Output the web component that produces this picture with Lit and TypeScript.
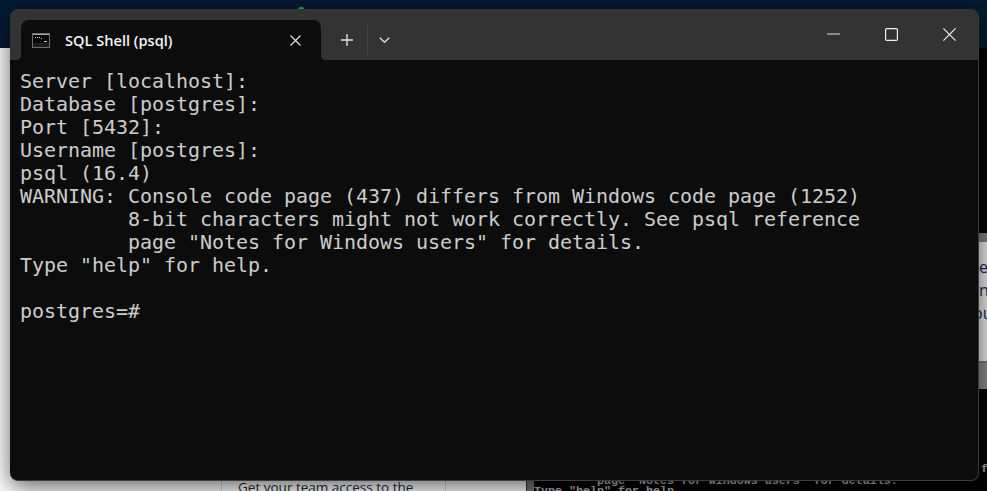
import { LitElement, html, css } from "lit";
import { customElement } from "lit/decorators.js";

const OUTPUT = `Server [localhost]:
Database [postgres]:
Port [5432]:
Username [postgres]:
psql (16.4)
WARNING: Console code page (437) differs from Windows code page (1252)
         8-bit characters might not work correctly. See psql reference
         page "Notes for Windows users" for details.
Type "help" for help.

postgres=#`;

@customElement("app-root")
export class AppRoot extends LitElement {
  static styles = css`
    :host {
      display: block;
      width: 987px;
      height: 491px;
      position: relative;
      overflow: hidden;
      background: #000;
      font-family: "Open Sans", sans-serif;
    }
    .navy {
      position: absolute;
      left: 0;
      top: 0;
      right: 0;
      height: 48px;
      background: #041b33;
    }
    .blob {
      position: absolute;
      left: 298px;
      top: 7px;
      width: 7px;
      height: 4px;
      border-radius: 3px 4px 0 0;
      background: #14b866;
    }
    .page {
      position: absolute;
      left: 0;
      top: 48px;
      width: 527px;
      height: 443px;
      background: #fff;
    }
    .rule {
      position: absolute;
      top: 0;
      bottom: 0;
      width: 1px;
      background: #d8d8d8;
    }
    .rule.a {
      left: 221px;
    }
    .rule.b {
      left: 445px;
    }
    .promo {
      position: absolute;
      left: 238px;
      top: 431px;
      font: 13.5px/16px "Open Sans", sans-serif;
      color: #1c2b3a;
      white-space: nowrap;
    }
    .back-term {
      position: absolute;
      left: 526px;
      top: 470px;
      right: 0;
      bottom: 0;
      display: flex;
      background: #000;
      border-left: 1px solid #333;
    }
    .back-scroll {
      width: 7px;
      background: #777;
    }
    .back-term pre {
      margin: 0;
      font: 11.67px/10px "Liberation Mono", monospace;
      font-weight: 700;
      color: #b8b8b8;
      padding-top: 6px;
    }
    .dialog {
      position: absolute;
      left: 978px;
      top: 233px;
      right: 0;
      height: 156px;
      display: flex;
      flex-direction: column;
      background: #e6e6e6;
      color: #0b2a55;
      font: 16px/23px "Open Sans", sans-serif;
      overflow: hidden;
    }
    .dialog .bar {
      height: 9px;
      background: #808080;
      flex: none;
    }
    .dialog .body {
      flex: 1;
      padding: 14px 0 0 1px;
      white-space: nowrap;
    }
    .dialog .body .shifted {
      margin-left: -6px;
    }
    .dialog .foot {
      height: 26px;
      flex: none;
      border-top: 2px solid #777;
      background: #8a8a8a;
    }
    .stray {
      position: absolute;
      left: 981px;
      top: 462px;
      font: 700 11.67px/14px "Liberation Mono", monospace;
      color: #a8a8a8;
    }
    .window {
      position: absolute;
      left: 10px;
      top: 9px;
      width: 969px;
      height: 472px;
      box-sizing: border-box;
      display: flex;
      flex-direction: column;
      background: #0c0c0c;
      border-radius: 8px;
      border: 1px solid #3c3c3c;
      border-top: 0;
      border-left: 0;
      overflow: hidden;
    }
    .shadow {
      position: absolute;
      left: 10px;
      top: 9px;
      width: 969px;
      height: 472px;
      border-radius: 8px;
      box-shadow: 0 6px 24px rgba(0, 0, 0, 0.62);
    }
    .titlebar {
      height: 51px;
      flex: none;
      display: flex;
      align-items: flex-end;
      background: #333;
      padding-left: 11px;
      color: #fff;
    }
    .tab {
      position: relative;
      width: 300px;
      height: 40px;
      box-sizing: border-box;
      display: flex;
      align-items: center;
      padding: 0 20px 0 11px;
      background: #0c0c0c;
      border-radius: 8px 8px 0 0;
    }
    .tab::before,
    .tab::after {
      content: "";
      position: absolute;
      bottom: 0;
      width: 4px;
      height: 4px;
    }
    .tab::before {
      left: -4px;
      background: radial-gradient(circle at 0 0, #333 3.5px, #0c0c0c 4px);
    }
    .tab::after {
      right: -4px;
      background: radial-gradient(circle at 100% 0, #333 3.5px, #0c0c0c 4px);
    }
    .tab .cmd {
      width: 18px;
      height: 15px;
      flex: none;
      margin-right: 15px;
    }
    .tab .label {
      flex: 1;
      font-size: 14.6px;
      font-weight: 600;
      color: #f4f4f4;
      white-space: nowrap;
    }
    .tab svg.x {
      width: 11px;
      height: 11px;
    }
    .tools {
      height: 40px;
      display: flex;
      align-items: center;
      padding-left: 20px;
    }
    .tools .plus {
      width: 12px;
      height: 12px;
    }
    .tools .sep {
      width: 1px;
      height: 30px;
      margin: 0 11px 0 14px;
      background: #444;
    }
    .tools .chev {
      width: 11px;
      height: 6px;
    }
    .caption {
      margin-left: auto;
      align-self: stretch;
      display: flex;
      align-items: flex-start;
      gap: 45px;
      padding: 19px 22px 0 0;
    }
    .caption svg {
      width: 13px;
      height: 13px;
      display: block;
    }
    pre.out {
      margin: 0;
      padding: 10px 0 0 10px;
      font: 20px/23px "DejaVu Sans Mono", monospace;
      letter-spacing: -0.04px;
      color: #ccc;
    }
  `;

  render() {
    return html`
      <div class="navy"></div>
      <div class="blob"></div>
      <div class="page">
        <div class="rule a"></div>
        <div class="rule b"></div>
        <div class="promo">Get your team access to the</div>
      </div>
      <div class="back-term">
        <div class="back-scroll"></div>
        <pre>         page "Notes for Windows users" for details.
Type "help" for help.</pre>
      </div>
      <div class="dialog">
        <div class="bar"></div>
        <div class="body">e<br />n<br /><span class="shifted">ou</span></div>
        <div class="foot"></div>
      </div>
      <div class="stray">f</div>
      <div class="shadow"></div>
      <div class="window">
        <div class="titlebar">
          <div class="tab">
            <svg class="cmd" viewBox="0 0 18 15">
              <rect x="0.5" y="0.5" width="17" height="14" fill="#050505" stroke="#6e6e6e" />
              <rect x="1" y="1" width="16" height="1" fill="#a8a8a8" />
              <path d="M3 4.5h1M5 4.5h1M7 4.5h1M9 5.5h1M12 8.5h3" stroke="#cfcfcf" stroke-width="1" fill="none" />
              <rect x="1" y="10" width="16" height="4" fill="#1c1c1c" />
            </svg>
            <span class="label">SQL Shell (psql)</span>
            <svg class="x" viewBox="0 0 11 11">
              <path d="M0.5 0.5L10.5 10.5M10.5 0.5L0.5 10.5" stroke="#e8e8e8" stroke-width="1.1" fill="none" />
            </svg>
          </div>
          <div class="tools">
            <svg class="plus" viewBox="0 0 12 12">
              <path d="M6 0V12M0 6H12" stroke="#e8e8e8" stroke-width="1.3" fill="none" />
            </svg>
            <div class="sep"></div>
            <svg class="chev" viewBox="0 0 11 6">
              <path d="M0.7 0.7L5.5 5.3L10.3 0.7" stroke="#e8e8e8" stroke-width="1.2" fill="none" />
            </svg>
          </div>
          <div class="caption">
            <svg viewBox="0 0 13 13">
              <path d="M0 6H13" stroke="#e0e0e0" stroke-width="1.2" fill="none" />
            </svg>
            <svg viewBox="0 0 13 13">
              <rect x="0.6" y="0.6" width="11.8" height="11.8" rx="1.2" stroke="#f0f0f0" stroke-width="1.2" fill="none" />
            </svg>
            <svg viewBox="0 0 13 13">
              <path d="M0.4 0.4L12.6 12.6M12.6 0.4L0.4 12.6" stroke="#f0f0f0" stroke-width="1.2" fill="none" />
            </svg>
          </div>
        </div>
        <pre class="out">${OUTPUT}</pre>
      </div>
    `;
  }
}
